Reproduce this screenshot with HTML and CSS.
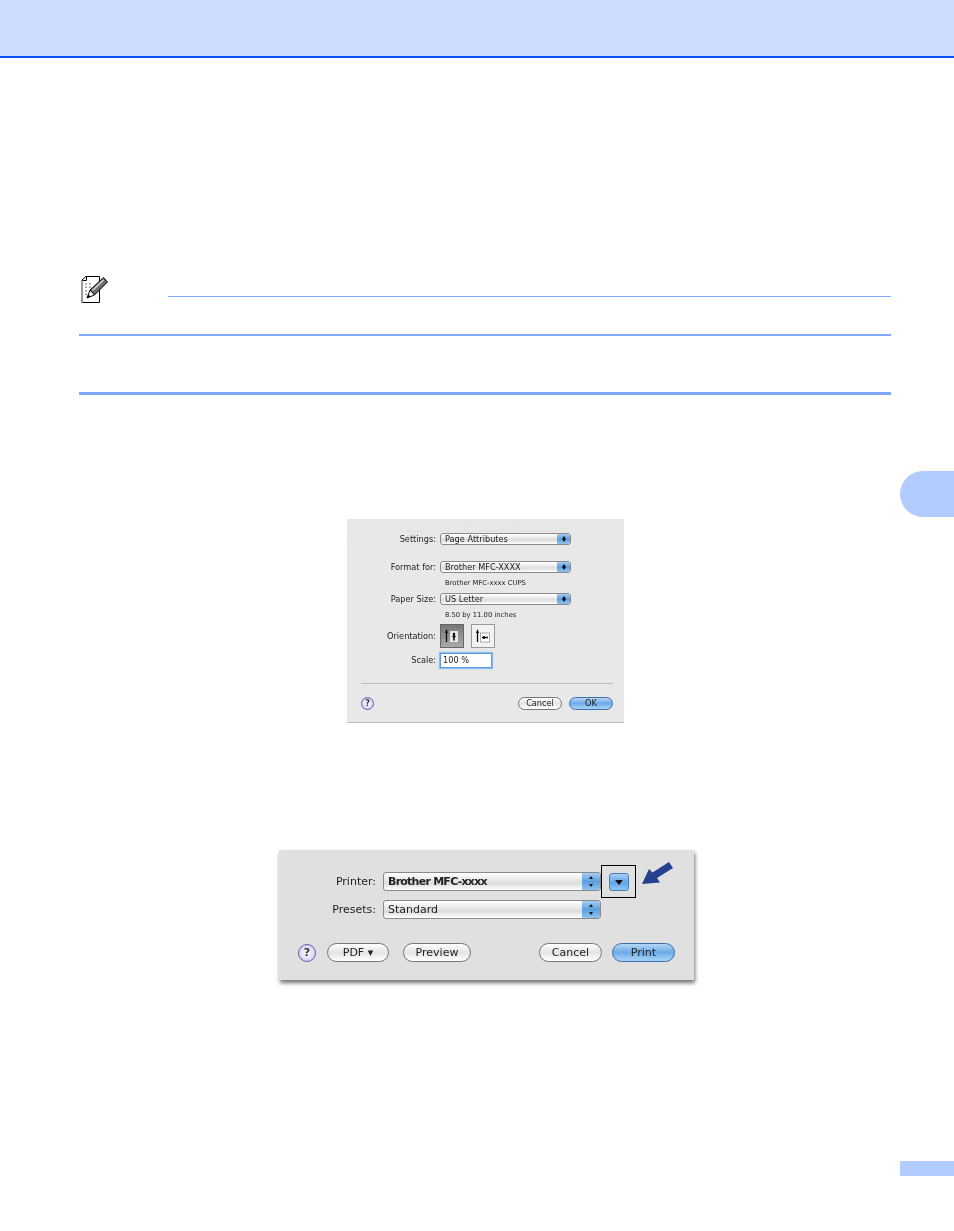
FILE: index.html
```html
<!DOCTYPE html>
<html lang="en">

<head>
    <meta charset="utf-8">
    <meta name="viewport" content="width=device-width, initial-scale=1.0">
    <title>Printing</title>

    <link rel="stylesheet" href="styles.css">
</head>

<body>

<header class="topbar"></header>

<div class="sidetab"></div>

<main>
    <section class="note">
        <svg class="noteicon" width="29" height="28" viewBox="0 0 29 28">
            <path d="M3 4 L7 0.5 H20.5 V26.5 H3 Z" fill="#fff" stroke="#000"/>
            <path d="M3 4 V26.5" stroke="#999" stroke-width="2"/>
            <path d="M3.5 4.5 H7.5 V1" fill="none" stroke="#000"/>
            <path d="M7 7 V8.5 M7 10.5 V12 M7 14 V15.5 M7 17.5 V19 M11 7 V8.5 M11 10.5 V12" stroke="#888" stroke-width="1.6"/>
            <path d="M11 14 L24.5 1.5 L28.5 6 L15.5 19 Z" fill="#6e6e6e" stroke="#000"/>
            <path d="M13.5 14.5 L24.5 4" stroke="#d8d8d8" stroke-width="1.4"/>
            <path d="M11 14 L15.5 19 L8 22 Z" fill="#fff" stroke="#000"/>
            <path d="M8 22 L9.5 18.5 L11.5 20.5 Z" fill="#000"/>
        </svg>
        <div class="noterule"></div>
    </section>

    <div class="rule first"></div>
    <div class="rule second"></div>

    <section class="dialog pagesetup">
        <svg class="ghost" width="277" height="36" viewBox="0 0 277 36">
            <g fill="none" stroke="#e1e1e1">
                <rect x="-4" y="3" width="46" height="9" rx="3"/>
                <rect x="52" y="3" width="50" height="9" rx="3"/>
                <rect x="118" y="3" width="42" height="9" rx="3"/>
                <rect x="166" y="3" width="48" height="9" rx="3"/>
                <path d="M4 20 H270" stroke="#dedede" stroke-dasharray="2 26"/>
                <path d="M30 30 H270" stroke="#e2e2e2" stroke-dasharray="2 36"/>
            </g>
        </svg>

        <div class="row"><label>Settings:</label><div class="sel"><span>Page Attributes</span><i class="step"></i></div></div>
        <div class="row format"><label>Format for:</label><div class="sel"><span>Brother MFC-XXXX</span><i class="step"></i></div></div>
        <p class="hint">Brother MFC-xxxx CUPS</p>
        <div class="row paper"><label>Paper Size:</label><div class="sel"><span>US Letter</span><i class="step"></i></div></div>
        <p class="hint">8.50 by 11.00 inches</p>
        <div class="row orient">
            <label>Orientation:</label>
            <div class="orbtn valgt">
                <svg width="16" height="16" viewBox="0 0 16 16">
                    <path d="M2.5 14 V4" stroke="#000" stroke-width="1.2"/>
                    <path d="M1 5 L2.5 1 L4 5 Z"/>
                    <rect x="6" y="3" width="8" height="11" fill="#e8e8e8"/>
                    <circle cx="10" cy="6" r="1.2"/>
                    <path d="M10 7 V12.5 M8.5 8.5 H11.5" stroke="#000" stroke-width="1.5"/>
                </svg>
            </div>
            <div class="orbtn">
                <svg width="16" height="16" viewBox="0 0 16 16">
                    <path d="M2.5 14 V4" stroke="#000" stroke-width="1.2"/>
                    <path d="M1 5 L2.5 1 L4 5 Z"/>
                    <rect x="5.5" y="5" width="9" height="9" fill="#fff" stroke="#aaa"/>
                    <circle cx="12" cy="9.5" r="1"/>
                    <path d="M7 9.5 H11 M9 8 V11" stroke="#000" stroke-width="1.5"/>
                </svg>
            </div>
        </div>
        <div class="row scale"><label>Scale:</label><div class="scalebox">100 %</div></div>
        <div class="divider"></div>
        <div class="buttons">
            <div class="help">?</div>
            <div class="pill">Cancel</div>
            <div class="pill blue">OK</div>
        </div>
    </section>

    <section class="dialog printer">
        <div class="row"><label>Printer:</label><div class="sel"><span class="strong">Brother MFC-xxxx</span><i class="step"></i></div><div class="disclose"></div></div>
        <div class="row presets"><label>Presets:</label><div class="sel"><span>Standard</span><i class="step"></i></div></div>
        <div class="buttons">
            <div class="help">?</div>
            <div class="pill pdf">PDF ▾</div>
            <div class="pill preview">Preview</div>
            <div class="pill cancel">Cancel</div>
            <div class="pill blue print">Print</div>
        </div>

        <!-- callout over the print dialog -->
        <div class="callout"></div>
        <svg class="arrow" width="32" height="23" viewBox="0 0 32 23">
            <path d="M0 22 L7 7 L10.5 10.5 L27 0 L31 6 L15 16 L18 20.5 Z" fill="#25408f"/>
        </svg>
    </section>
</main>

<footer>
    <div class="pagebox"></div>
</footer>

</body>

</html>
```

FILE: styles.css
```css
body {
    margin: 0;
    background: #fff;
    font-family: "DejaVu Sans", sans-serif;
    overflow: hidden;
}

.topbar {
    height: 56px;
    background-color: #ccdcff;
    border-bottom: 2px solid #0051f5;
}

.sidetab {
    position: absolute;
    top: 471px;
    left: 900px;
    width: 54px;
    height: 46px;
    background-color: #b3ccff;
    border-radius: 23px 0 0 23px;
}

main {
    margin: 0 63px 0 79px;
}

/* note and rules */
.note {
    display: flex;
    height: 28px;
    margin-top: 218px;
}

.noteicon {
    flex: none;
}

.noterule {
    flex: 1;
    height: 1px;
    margin: 20px 0 0 60px;
    background-color: #80a8ff;
}

.rule {
    background-color: #80a8ff;
}

.rule.first {
    height: 2px;
    margin-top: 30px;
}

.rule.second {
    height: 3px;
    margin-top: 56px;
}

/* dialogs */
.dialog {
    position: relative;
    box-sizing: border-box;
    color: #222;
    filter: blur(0.3px);
}

.row {
    display: flex;
    align-items: center;
}

.row label {
    flex: none;
    text-align: right;
}

.sel {
    flex: none;
    display: flex;
    align-items: center;
    justify-content: space-between;
    box-sizing: border-box;
    border: 1px solid #8a8a8a;
    border-radius: 3px;
    background: linear-gradient(#fff, #e6e6e6 45%, #dcdcdc 60%, #fff);
    overflow: hidden;
}

.sel span {
    padding-left: 4px;
}

.step {
    position: relative;
    flex: none;
    align-self: stretch;
    background: linear-gradient(#a8cdf2, #5c9fe0 50%, #8fc3f0);
}

.step::before,
.step::after {
    content: "";
    position: absolute;
    left: 50%;
    margin-left: -2px;
    border-left: 2px solid transparent;
    border-right: 2px solid transparent;
}

.step::before {
    top: 18%;
    border-bottom: 3px solid #111;
}

.step::after {
    bottom: 18%;
    border-top: 3px solid #111;
}

.buttons {
    display: flex;
    align-items: center;
}

.help {
    box-sizing: border-box;
    flex: none;
    text-align: center;
    border: 1px solid #6b5aa8;
    border-radius: 50%;
    background: radial-gradient(#fff, #c9bdf0);
    color: #333;
    font-weight: bold;
}

.pill {
    flex: none;
    box-sizing: border-box;
    text-align: center;
    border: 1px solid #777;
    background: linear-gradient(#fff, #e4e4e4 50%, #fff);
}

.pill.blue {
    border-color: #3c6ea8;
    background: linear-gradient(#b5d6f5, #6cabe8 50%, #a9d6f8);
}

/* page setup dialog */
.pagesetup {
    width: 277px;
    height: 204px;
    margin: 124px 0 0 268px;
    padding-top: 14px;
    background-color: #e8e8e8;
    border-bottom: 1px solid #bbb;
    font-size: 8.2px;
}

.ghost {
    position: absolute;
    top: 0;
    left: 0;
}

.pagesetup .row {
    position: relative;
}

.pagesetup label {
    width: 89px;
    margin-right: 4px;
    padding-bottom: 1px;
}

.pagesetup .sel {
    width: 131px;
    height: 12px;
}

.pagesetup .sel span {
    padding-bottom: 1px;
}

.pagesetup .step {
    width: 13px;
}

.pagesetup .row.format {
    margin-top: 16px;
}

.pagesetup .row.paper {
    margin-top: 5px;
}

.hint {
    height: 10px;
    margin: 5px 0 0 98px;
    font-size: 6.8px;
    line-height: 10px;
}

.orient {
    height: 24px;
    margin-top: 4px;
}

.orbtn {
    box-sizing: border-box;
    display: flex;
    align-items: center;
    justify-content: center;
    width: 24px;
    height: 24px;
    margin-right: 7px;
    border: 1px solid #999;
    background: #f2f2f2;
}

.orbtn.valgt {
    background: linear-gradient(#777, #aaa);
    border-color: #666;
}

.scale {
    margin-top: 5px;
}

.scalebox {
    box-sizing: border-box;
    width: 52px;
    height: 15px;
    padding-left: 2px;
    line-height: 13px;
    background: #fff;
    border: 1px solid #5b9be0;
    box-shadow: 0 0 1px 1px #8fbdf0;
}

.divider {
    height: 1px;
    margin: 15px 11px 0 14px;
    background-color: #bdbdbd;
}

.pagesetup .buttons {
    margin: 13px 11px 0 14px;
}

.pagesetup .help {
    width: 13px;
    height: 13px;
    margin-right: auto;
    font-size: 8px;
    line-height: 11px;
}

.pagesetup .pill {
    width: 44px;
    height: 13px;
    margin-left: 7px;
    border-radius: 7px;
    font-size: 8.2px;
    line-height: 11px;
}

/* print dialog */
.printer {
    width: 415px;
    height: 130px;
    margin: 127px 0 0 200px;
    padding-top: 22px;
    background-color: #e0e0e0;
    box-shadow: 1px 3px 4px rgba(0, 0, 0, 0.55);
    font-size: 11px;
}

.printer label {
    width: 97px;
    margin-right: 7px;
}

.printer .sel {
    width: 218px;
    height: 19px;
}

.printer .step {
    width: 18px;
}

.strong {
    font-weight: bold;
    letter-spacing: -0.75px;
}

.disclose {
    position: relative;
    box-sizing: border-box;
    flex: none;
    width: 20px;
    height: 18px;
    margin-left: 8px;
    border: 1px solid #4a7fb5;
    border-radius: 3px;
    background: linear-gradient(#a8d0f5, #5fa5e6 55%, #8fc6f2);
}

.disclose::after {
    content: "";
    position: absolute;
    top: 6px;
    left: 5px;
    border-left: 4px solid transparent;
    border-right: 4px solid transparent;
    border-top: 5px solid #111;
}

.presets {
    margin-top: 9px;
}

.printer .buttons {
    margin: 24px 0 0 19px;
}

.printer .help {
    width: 18px;
    height: 18px;
    font-size: 11px;
    line-height: 16px;
}

.printer .pill {
    height: 19px;
    border-radius: 10px;
    line-height: 17px;
}

.pill.pdf {
    width: 62px;
    margin-left: 11px;
}

.pill.preview {
    width: 68px;
    margin-left: 14px;
}

.pill.cancel {
    width: 63px;
    margin-left: 68px;
}

.pill.print {
    width: 63px;
    margin-left: 10px;
}

.callout {
    position: absolute;
    top: 15px;
    left: 322px;
    width: 35px;
    height: 33px;
    box-sizing: border-box;
    border: 1px solid #000;
}

.arrow {
    position: absolute;
    top: 12px;
    left: 363px;
}

/* page number box */
footer {
    display: flex;
    justify-content: flex-end;
    margin-top: 181px;
}

.pagebox {
    width: 54px;
    height: 15px;
    background-color: #b3ccff;
}
```
